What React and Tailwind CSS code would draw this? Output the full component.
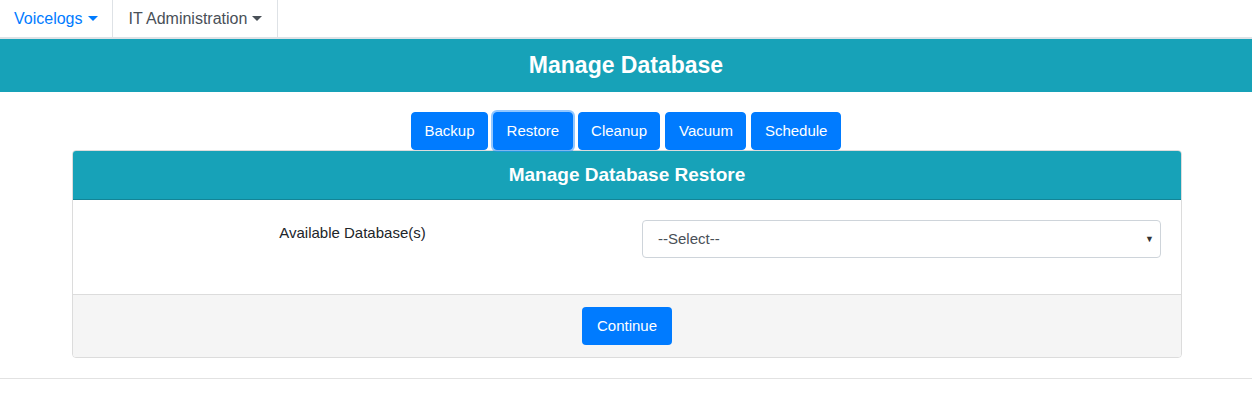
import { useState } from 'react';

const tabs = ['Backup', 'Restore', 'Cleanup', 'Vacuum', 'Schedule'];

function Caret() {
  return <span className="ml-[5px] inline-block h-0 w-0 border-x-[5px] border-t-[5px] border-x-transparent border-t-current align-middle" />;
}

export default function App() {
  const [active] = useState('Restore');

  return (
    <div className="min-h-[401px] bg-white text-[15px] text-[#212529]" style={{ fontFamily: '"Liberation Sans", Arial, sans-serif' }}>
      <nav className="flex h-[39px] border-b-2 border-[#dee2e6] text-[16px]">
        <a href="#" className="flex items-center pl-[14px] pr-[14px] text-[#007bff]">
          Voicelogs
          <Caret />
        </a>
        <a href="#" className="flex items-center border-x border-[#dee2e6] pl-4 pr-[15px] text-[#495057]">
          IT Administration
          <Caret />
        </a>
      </nav>

      <div className="flex h-[53px] items-center justify-center bg-[#17a2b8]">
        <h3 className="text-[23px] font-bold text-white">Manage Database</h3>
      </div>

      <div className="mt-5 flex justify-center gap-[5px]">
        {tabs.map((t) => (
          <button
            key={t}
            className={
              'h-[38px] rounded-[4px] border border-[#007bff] bg-[#007bff] px-[12.5px] text-white ' +
              (t === active ? 'shadow-[0_0_0_2px_rgba(38,143,255,0.5)]' : '')
            }
          >
            {t}
          </button>
        ))}
      </div>

      <div className="ml-[72px] w-[1110px] overflow-hidden rounded-[4px] border border-[#dcdcdc]">
        <div className="flex h-[49px] items-center justify-center border-b border-[#138496] bg-[#17a2b8]">
          <h5 className="text-[19px] font-bold text-white">Manage Database Restore</h5>
        </div>
        <div className="px-5 pt-5 pb-9">
          <div className="-mx-[15px] grid grid-cols-2">
            <div className="px-[15px] text-center">
              <label className="block pt-[1px] leading-6">Available Database(s)</label>
            </div>
            <div className="px-[15px]">
              <div className="relative flex h-[38px] items-center rounded-[4px] border border-[#ced4da] pl-[15px] text-[#495057]">
                --Select--
                <span className="absolute right-[6px] top-[12px] text-[9px] text-[#333]">▼</span>
              </div>
            </div>
          </div>
        </div>
        <div className="flex justify-center border-t border-[#dcdcdc] bg-[#f5f5f5] py-3">
          <button className="h-[38px] rounded-[4px] bg-[#007bff] px-[15px] text-white">Continue</button>
        </div>
      </div>

      <hr className="mt-5 border-[#e2e2e2]" />
    </div>
  );
}
